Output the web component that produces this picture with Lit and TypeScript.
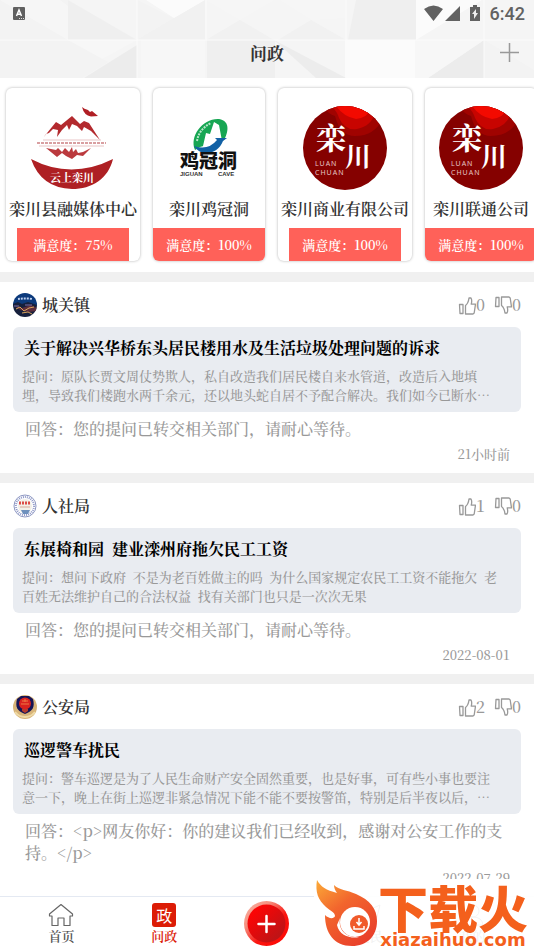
import { LitElement, html, css, svg } from "lit";
import { customElement, property } from "lit/decorators.js";

interface Post {
  dept: string;
  avatar: "town" | "bureau" | "police";
  likes: number;
  dislikes: number;
  title: string;
  question: string;
  answer: string;
  date: string;
}

const posts: Post[] = [
  {
    dept: "城关镇", avatar: "town", likes: 0, dislikes: 0,
    title: "关于解决兴华桥东头居民楼用水及生活垃圾处理问题的诉求",
    question: "提问：原队长贾文周仗势欺人，私自改造我们居民楼自来水管道，改造后入地填\n埋，导致我们楼跑水两千余元，还以地头蛇自居不予配合解决。我们如今已断水…",
    answer: "回答：您的提问已转交相关部门，请耐心等待。",
    date: "21小时前",
  },
  {
    dept: "人社局", avatar: "bureau", likes: 1, dislikes: 0,
    title: "东展椅和园\u00a0 建业滦州府拖欠民工工资",
    question: "提问：想问下政府\u00a0 不是为老百姓做主的吗\u00a0 为什么国家规定农民工工资不能拖欠\u00a0 老\n百姓无法维护自己的合法权益\u00a0 找有关部门也只是一次次无果",
    answer: "回答：您的提问已转交相关部门，请耐心等待。",
    date: "2022-08-01",
  },
  {
    dept: "公安局", avatar: "police", likes: 2, dislikes: 0,
    title: "巡逻警车扰民",
    question: "提问：警车巡逻是为了人民生命财产安全固然重要，也是好事，可有些小事也要注\n意一下，晚上在街上巡逻非紧急情况下能不能不要按警笛，特别是后半夜以后，…",
    answer: "回答：<p>网友你好：你的建议我们已经收到，感谢对公安工作的支持。</p>",
    date: "2022-07-29",
  },
];

const avatars = {
  town: svg`
    <clipPath id="c"><circle cx="12" cy="12" r="12"/></clipPath>
    <g clip-path="url(#c)">
      <path fill="#0c3a7c" d="M0 0h24v12H0z"/>
      <path fill="#17203c" d="M0 11l5-2 4 2 6-2 9 3v12H0z"/>
      <path fill="#5c2d3c" d="M2 13l7 2 9-3 6 3v3l-9 1-8-2z"/>
      <path stroke="#d9a45c" fill="none" d="M3 16l4-2 4 4 5-3 5-1M9 20l6-1 4 2"/>
      <path stroke="#7f6fa8" fill="none" d="M1 13h5M12 12h7"/>
      <path stroke="#bfd0ee" fill="none" stroke-dasharray="2 1" stroke-width="2" d="M5 6q7-1 15 0"/>
    </g>`,
  bureau: svg`
    <circle cx="12" cy="12" r="11" fill="#fff" stroke="#8d97c2"/>
    <circle cx="12" cy="12" r="9" fill="none" stroke="#8e98c8" stroke-width="2" stroke-dasharray="1 1"/>
    <circle cx="12" cy="12" r="7" fill="#f2f0e8"/>
    <path d="M8 16h9l-2 4h-5z" fill="#6f91bd"/>
    <path d="M6 9h12" stroke="#dc4b45" stroke-width="3" stroke-dasharray="2 1"/>
    <path d="M7 13h10" stroke="#d8a898"/>`,
  police: svg`
    <circle cx="12" cy="12" r="12" fill="#d8b479"/>
    <path d="M4 4l4-3h8l4 3c2 8 0 12-8 15C4 16 2 12 4 4z" fill="#161455"/>
    <circle cx="12" cy="8.500" r="6" fill="#d9221f"/>
    <path d="M9 6h6M8 9h8M12 4v3" stroke="#ee7a44"/>
    <path d="M9 14h6v2l-3 2-3-2z" fill="#b33a2d"/>
    <path d="M2 17q4 5 10 5t10-5" fill="none" stroke="#f0dca8" stroke-width="2"/>`,
};

const thumb = svg`<path d="M1.500 8.500h3.500v9H2z M7.500 9.500c2-1.500 3-3.500 3.500-7.500h2c1.200 2 .8 4 .2 6.200h4.300l-1.300 8.800-1.200 1H7.500z"/>`;

const roundLogo = svg`
  <clipPath id="r"><circle cx="42" cy="42" r="42"/></clipPath>
  <g clip-path="url(#r)">
    <path fill="#850100" d="M0 0h84v84H0z"/>
    <path fill="#a00300" d="M20 0q5 8 12 10 5 20 20 20 20 0 28-18V0z"/>
    <path fill="#c80400" d="M28 0q6 5 8 12 6 13 18 11 15-3 18-17V0z"/>
    <path fill="#f30a00" d="M33 0q8 11 20 13 11-1 15-10V0z"/>
  </g>
  <text class="brush" x="13" y="43" font-size="30">栾</text>
  <text class="brush" x="42" y="60" font-size="26">川</text>
  <text class="latin" x="12" y="60" font-size="7">LUAN</text>
  <text class="latin" x="12" y="69" font-size="7">CHUAN</text>`;

const logos = {
  media: svg`
    <path fill="#b01f25" d="M51 1q2 2 6 3l2 2 2-1 6 5-7 .500q-7-1-9-9.500z"/>
    <path fill="#b32a2e" fill-rule="evenodd" d="M12 32L25 16l5 3 11-9 8 8 4-3 5 2 11 17-9-9-7-4-2 4-5-5-5-2-3 6-2-5-5 5-5 7 1-7-5-1-4 4-3 1z"/>
    <path fill="none" stroke="#d99fa1" stroke-width="2" stroke-dasharray="3 1" d="M6 37h69"/>
    <path fill="none" stroke="#e8c5c6" d="M8 40h65M12 34h58"/>
    <path fill="#bb3a3e" d="M15 42l11 9 5-4 4 3 6 3 5-4 6 1 8-8-8 4-5 1-2-4-3 3-1-5-3 5-4-4-3 4-4-4-2 2z"/>
    <path fill="#ae2024" d="M0 53q40 21 82 0c-5 20-21 30-41 30Q10 82 0 53z"/>
    <text class="brush" x="19" y="76" font-size="11">云上栾川</text>`,
  cave: svg`
    <path fill="#17a653" d="M17 44C11 30 25 12 41 13c12 2 9 14 5 21L22 41z"/>
    <path fill="#fff" d="M25 40l3-13 4 1 4-12 5 3 3 16-9 7z"/>
    <path fill="none" stroke="#b9e7ca" stroke-dasharray="2 1" stroke-width="2" d="M19 35q2-12 14-18"/>
    <path fill="#1261a5" d="M16 40q14 5 23-6l-2-2h12l-4 3c-5 13-21 17-29 5z"/>
    <text class="ink" x="2" y="62" font-size="19">鸡冠洞</text>
    <text class="small" x="2" y="70" font-size="6">JIGUAN</text>
    <text class="small" x="40" y="70" font-size="6">CAVE</text>`,
  round: roundLogo,
};

const cards: { name: string; rate: number; logo: keyof typeof logos }[] = [
  { name: "栾川县融媒体中心", rate: 75, logo: "media" },
  { name: "栾川鸡冠洞", rate: 100, logo: "cave" },
  { name: "栾川商业有限公司", rate: 100, logo: "round" },
  { name: "栾川联通公司", rate: 100, logo: "round" },
];

@customElement("dept-card")
class DeptCard extends LitElement {
  @property() name = "";
  @property({ type: Number }) rate = 0;
  @property() logo: keyof typeof logos = "round";

  static styles = css`
    :host {
      display: flex; flex-direction: column; align-items: center; flex: none;
      min-width: 112px; padding-top: 18px; border-radius: 6px; overflow: hidden;
      background: #fff; box-shadow: 0 0 3px rgba(0, 0, 0, 0.3);
    }
    .logo { width: 84px; height: 84px; }
    .logo.cave { width: 62px; }
    .name { padding: 0 3px; font-size: 16px; line-height: 38px; font-weight: 600; color: #333; white-space: nowrap; }
    .rate { width: 112px; font-size: 13px; line-height: 33px; text-align: center; font-weight: 600; color: #fff; background: #ff6159; }
    .brush { fill: #fff; font-family: "Noto Serif CJK SC", "Noto Sans CJK SC", serif; font-weight: 700; }
    .latin { fill: #e5c3c3; font-family: "Noto Sans", sans-serif; letter-spacing: 1px; }
    .ink { fill: #111; font-family: "Noto Sans CJK SC", sans-serif; font-weight: 900; }
    .small { fill: #333; font-family: "Liberation Sans", sans-serif; font-weight: 700; }
  `;

  render() {
    return html`
      <svg class="logo ${this.logo}" viewBox="0 0 ${this.logo === "cave" ? 62 : 84} 84" aria-hidden="true">${logos[this.logo]}</svg>
      <div class="name">${this.name}</div>
      <div class="rate">满意度：${this.rate}%</div>
    `;
  }
}

@customElement("post-item")
class PostItem extends LitElement {
  @property({ attribute: false }) post!: Post;

  static styles = css`
    :host { display: block; padding: 11px 13px 9px; background: #fff; color: #999; font-weight: 500; }
    .head { display: flex; align-items: center; height: 24px; }
    .avatar { width: 24px; height: 24px; }
    .dept { flex: 1; margin: 0 0 0 5px; font-size: 16px; line-height: 24px; font-weight: 600; color: #333; }
    .vote {
      display: flex; align-items: center; margin: 0 0 0 9px; padding: 0; border: 0; background: none;
      font: inherit; font-size: 16px; line-height: 24px; color: #999;
    }
    .thumb { width: 18px; height: 19px; fill: none; stroke: #999; stroke-width: 1.3; stroke-linejoin: round; }
    .down { transform: scaleY(-1); }
    .ask { margin-top: 10px; padding: 10px 9px 8px; border-radius: 6px; background: #e9ecf1; }
    .title { margin: 0 2px 7px; font-size: 16px; line-height: 22px; font-weight: 700; color: #000; }
    .question { margin: 0; font-size: 13px; line-height: 19px; white-space: pre-line; }
    .answer { margin: 6px 12px 4px; font-size: 16px; line-height: 22px; }
    .date { display: block; margin-right: 11px; font-size: 13px; line-height: 20px; text-align: right; }
  `;

  render() {
    const p = this.post;
    return html`
      <div class="head">
        <svg class="avatar" viewBox="0 0 24 24" aria-hidden="true">${avatars[p.avatar]}</svg>
        <h2 class="dept">${p.dept}</h2>
        <button class="vote" aria-label="赞同"><svg class="thumb" viewBox="0 0 18 19">${thumb}</svg>${p.likes}</button>
        <button class="vote" aria-label="反对"><svg class="thumb down" viewBox="0 0 18 19">${thumb}</svg>${p.dislikes}</button>
      </div>
      <div class="ask">
        <h3 class="title">${p.title}</h3>
        <p class="question">${p.question}</p>
      </div>
      <p class="answer">${p.answer}</p>
      <time class="date">${p.date}</time>
    `;
  }
}

@customElement("app-root")
class AppRoot extends LitElement {
  static styles = css`
    :host {
      position: relative; display: flex; flex-direction: column; height: 100vh; overflow: hidden;
      background: #fff; color: #333;
      font-family: "Noto Serif CJK SC", "Noto Sans CJK SC", serif;
    }
    .top { position: relative; flex: none; background: #f5f5f5; }
    .facets { position: absolute; inset: 0; width: 100%; height: 100%; opacity: 0.65; }
    .status { position: relative; display: flex; align-items: center; height: 27px; padding: 0 9px 0 13px; }
    .sys { flex: 1; }
    .sys svg, .signals { display: block; }
    .clock { margin-left: 10px; font: 500 18px/27px Roboto, sans-serif; color: #626262; }
    .bar { position: relative; display: grid; grid-template-columns: 1fr auto 1fr; align-items: center; height: 51px; padding: 0 14px; }
    .heading { grid-column: 2; margin: 0; font-size: 17px; line-height: 24px; font-weight: 700; }
    .add { justify-self: end; display: flex; padding: 0; border: 0; background: none; }
    .feed { flex: 1; min-height: 0; overflow: hidden; display: flex; flex-direction: column; gap: 10px; background: #f0f0f0; }
    .feed > * { flex: none; }
    .cards { display: flex; gap: 13px; padding: 10px 6px 11px; overflow: hidden; background: #fff; }
    .nav { flex: none; margin-top: 17px; border-top: 1px solid #e4e9f2; padding: 0 10px; display: grid; grid-template-columns: repeat(5, 1fr); height: 53px; }
    .tab { display: flex; flex-direction: column; align-items: center; padding-top: 6px; font-size: 13px; line-height: 17px; font-weight: 600; color: #555; text-decoration: none; }
    .tab svg { width: 26px; height: 24px; flex: none; }
    .tab.on { color: #dc1c0c; }
    .badge { width: 24px; height: 24px; border-radius: 3px; background: #dc1c06; color: #fff; font: 400 16px/24px "Noto Sans CJK SC", sans-serif; text-align: center; }
    .post { justify-self: center; width: 45px; height: 45px; margin-top: 4px; padding: 0; border: 0; background: none; }
    .mark { position: absolute; right: 0; bottom: 0; display: flex; width: 220px; height: 70px; background: rgba(255, 255, 255, 0.92); }
    .flame { position: absolute; left: 0; bottom: 0; width: 66px; height: 70px; }
    .brand { display: flex; flex-direction: column; align-items: center; margin-left: 64px; color: #f4601c; }
    .brand-name { font: 900 50px/52px "Noto Sans CJK SC", sans-serif; white-space: nowrap; }
    .brand-site { font: 700 18px/16px "DejaVu Sans", sans-serif; }
  `;

  render() {
    return html`
      <header class="top">
        <svg class="facets" viewBox="0 0 534 78" preserveAspectRatio="none" aria-hidden="true">
          <path fill="#f2f2f2" d="M0 0h68v40H0zM137 0l36 18 34 22h-70z"/>
          <path fill="#ededed" d="M68 0l69 40H68zM356 0h60v40h-68zM205 40h70v38h-70z"/>
          <path fill="#fff" d="M146 0h60l-32 18zM345 40h70v38h-70zM416 40V0h66z"/>
          <path fill="#efefef" d="M137 40l68-40v40zM206 40l34-20 34 20zM278 40l33-20 35 20z"/>
          <path fill="#f8f8f8" d="M0 0h60l8 6v34zM206 0h68l-34 20zM280 0h66v18l-34 2z"/>
          <path fill="#e8e8e8" d="M84 78l53-33v33zM274 40l72 38h-30zM428 78l56-38v38z"/>
          <path fill="#f9f9f9" d="M68 40h69l-69 38zM141 40h64v38h-64zM415 40h69l-56 38h-13z"/>
          <path fill="#f2f2f2" d="M0 40h68l40 22-26 16H0zM484 40l50 30v8h-50z"/>
          <path stroke="#fff" fill="none" d="M0 40h534M137 0v78M206 0v78M346 0v78M484 0v78"/>
        </svg>
        <div class="status">
          <div class="sys">
            <svg width="12" height="13" viewBox="0 0 12 13" aria-hidden="true"><rect width="12" height="13" rx="1" fill="#606060"/><path d="M3.500 9L6 3l2.500 6M4.300 7.200h3.400" fill="none" stroke="#fff" stroke-width="1.500"/><path d="M6 11.500h5" stroke="#ddd" stroke-dasharray="1 1"/></svg>
          </div>
          <svg class="signals" width="56" height="17" viewBox="0 0 56 17" fill="#626262" aria-hidden="true">
            <path d="M0 4q9.500-7 19 0L9.500 16zM36 1v15H21zM46 2h3V0h4v2h3v14H46z"/>
            <path d="M52 4l-4 5h2v5l4-6h-2z" fill="#eee"/>
          </svg>
          <span class="clock">6:42</span>
        </div>
        <div class="bar">
          <h1 class="heading">问政</h1>
          <button class="add" aria-label="添加"><svg width="21" height="21" viewBox="0 0 21 21"><path d="M1 10.500h19M10.500 1v19" stroke="#999" stroke-width="1.500"/></svg></button>
        </div>
      </header>

      <main class="feed">
        <section class="cards">
          ${cards.map((c) => html`<dept-card .name=${c.name} .rate=${c.rate} .logo=${c.logo}></dept-card>`)}
        </section>
        ${posts.map((p) => html`<post-item .post=${p}></post-item>`)}
      </main>

      <nav class="nav">
        <a class="tab" href="#home">
          <svg viewBox="0 0 26 24" fill="none" stroke="#666" stroke-width="1.200" stroke-linejoin="round"><path d="M4 13H1.500V11L13 1.500 24.500 11v2H22v9.500h-6V15h-6v7.500H4z"/></svg>
          首页
        </a>
        <a class="tab on" href="#ask"><span class="badge">政</span>问政</a>
        <button class="post" aria-label="发布">
          <svg width="45" height="45" viewBox="0 0 45 45">
            <defs>
              <linearGradient id="ring" x1="0" y1="0" x2="1" y2="1"><stop offset="0" stop-color="#f9b5a8"/><stop offset=".3" stop-color="#f5907f"/><stop offset=".6" stop-color="#fa1510"/><stop offset="1" stop-color="#ff0500"/></linearGradient>
              <linearGradient id="disc" x1="0" y1="0" x2="1" y2="1"><stop offset=".2" stop-color="#fa0505"/><stop offset="1" stop-color="#ad181b"/></linearGradient>
            </defs>
            <circle cx="22.500" cy="22.500" r="22.500" fill="url(#ring)"/>
            <circle cx="22.500" cy="22.500" r="19" fill="url(#disc)"/>
            <path d="M14.500 23h16M22.500 15v16" stroke="#fff" stroke-width="2.500" stroke-linecap="round"/>
          </svg>
        </button>
        <a class="tab" href="#service">
          <svg viewBox="0 0 26 24" fill="none" stroke="#666"><path d="M23 2L3 11l6 3 1 7 4-5 5 2z"/></svg>
          便民
        </a>
        <a class="tab" href="#me">
          <svg viewBox="0 0 26 24" fill="none" stroke="#666"><circle cx="13" cy="8" r="6"/><path d="M3 22q1-8 10-8t10 8z"/></svg>
          我的
        </a>
      </nav>

      <aside class="mark">
        <svg class="flame" viewBox="0 0 66 70" aria-hidden="true">
          <defs><linearGradient id="fire" x1="0" y1="0" x2=".7" y2="1"><stop offset="0" stop-color="#fbab38"/><stop offset=".45" stop-color="#f2652d"/><stop offset="1" stop-color="#e9402b"/></linearGradient></defs>
          <path fill="url(#fire)" d="M3 0c4 7 9 10 20 13-2-3-3-5-3-8 5 5 13 5 22 9 14 6 21 15 21 27 0 15-10 25-25 25-18 0-27-13-27-31 4 4 9 4 10 1 0-4-5-5-9-9C4 20 1 12 3 0z"/>
          <circle cx="41" cy="42" r="15" fill="#fff"/>
          <path fill="#fff" d="M26 38c-2 12 6 20 19 19-7 2-20-1-22-12z"/>
          <circle cx="45" cy="44" r="9" fill="#f05a2b"/>
          <path d="M45 38v6M42.500 42l2.500 3 2.500-3M40 46v3h10v-3" fill="none" stroke="#fff" stroke-width="1.500"/>
        </svg>
        <div class="brand"><span class="brand-name">下载火</span><span class="brand-site">xiazaihuo.com</span></div>
      </aside>
    `;
  }
}
